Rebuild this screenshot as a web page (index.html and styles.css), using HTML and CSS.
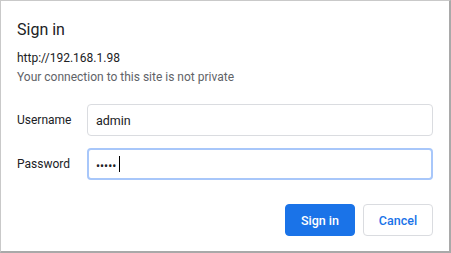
FILE: index.html
```html
<!DOCTYPE html>
<html lang="en">
<head>
<meta charset="utf-8">
<title>Sign in</title>
<link rel="stylesheet" href="styles.css">
</head>
<body>
<div class="dialog">
  <h1 class="title">Sign in</h1>
  <p class="origin">http://192.168.1.98</p>
  <p class="note">Your connection to this site is not private</p>
  <div class="fields">
    <div class="row">
      <label class="label">Username</label>
      <div class="field">admin</div>
    </div>
    <div class="row">
      <label class="label">Password</label>
      <div class="field focused"><span class="dots">&#8226;&#8226;&#8226;&#8226;&#8226;</span><span class="caret"></span></div>
    </div>
  </div>
  <div class="actions">
    <button class="btn primary">Sign in</button>
    <button class="btn secondary">Cancel</button>
  </div>
</div>
</body>
</html>
```

FILE: styles.css
```css
html, body {
  margin: 0;
  padding: 0;
  background: #ffffff;
}
body {
  font-family: Roboto, "Noto Sans", "Liberation Sans", sans-serif;
  color: #202124;
}
.dialog {
  box-sizing: border-box;
  width: 451px;
  height: 253px;
  border: 1px solid #c9c9c9;
  border-right: 2px solid #a9a9a9;
  border-bottom: 2px solid #a9a9a9;
  padding: 19px 16px 0 16px;
  background: #ffffff;
}
.title {
  margin: 0;
  font-size: 16px;
  line-height: 20px;
  font-weight: 400;
  color: #202124;
}
.origin {
  margin: 10px 0 0 0;
  font-size: 12px;
  line-height: 16px;
  color: #202124;
}
.note {
  margin: 3px 0 0 0;
  font-size: 12px;
  line-height: 16px;
  color: #5f6368;
}
.fields {
  margin-top: 19px;
  display: flex;
  flex-direction: column;
  gap: 12px;
}
.row {
  display: flex;
  align-items: center;
}
.label {
  width: 70px;
  font-size: 12px;
  color: #202124;
}
.field {
  box-sizing: border-box;
  flex: 1;
  height: 32px;
  border: 1px solid #dadce0;
  border-radius: 4px;
  padding: 0 8px;
  display: flex;
  align-items: center;
  font-size: 12.5px;
  color: #202124;
}
.field.focused {
  border: 2px solid #a8c7fa;
  padding: 0 7px;
}
.dots {
  font-size: 12px;
  letter-spacing: 0px;
  position: relative;
  top: 2px;
  color: #202124;
}
.caret {
  display: inline-block;
  width: 1px;
  height: 16px;
  background: #000000;
  margin-left: 3px;
}
.actions {
  margin-top: 24px;
  display: flex;
  justify-content: flex-end;
  gap: 8px;
}
.btn {
  box-sizing: border-box;
  height: 32px;
  border-radius: 4px;
  font-family: Roboto, "Noto Sans", "Liberation Sans", sans-serif;
  font-size: 12.5px;
  font-weight: 500;
  cursor: pointer;
}
.primary {
  width: 70px;
  background: #1a73e8;
  border: 1px solid #1a73e8;
  color: #ffffff;
}
.secondary {
  width: 70px;
  background: #ffffff;
  border: 1px solid #dadce0;
  color: #1a73e8;
}
```
